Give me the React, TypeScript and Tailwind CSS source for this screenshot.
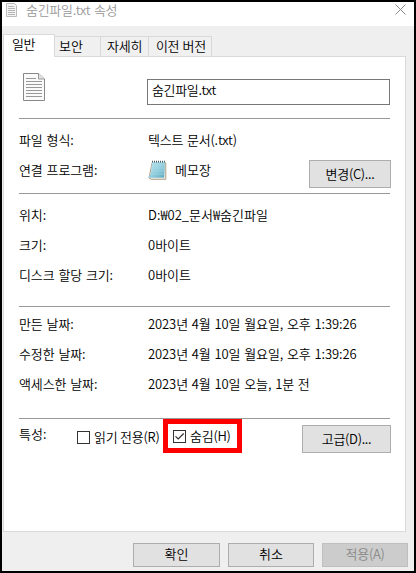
import { useState } from "react";
import type { ReactNode } from "react";

const tabs = [
  { label: "보안", className: "w-[46px] pl-[4px]" },
  { label: "자세히", className: "w-[48px] pl-[6px] tracking-[-0.2px]" },
  { label: "이전 버전", className: "w-[63px] pl-[7px] tracking-[-0.4px]" },
];

const dates = [
  { label: "만든 날짜:", value: "2023년 4월 10일 월요일, 오후 1:39:26" },
  { label: "수정한 날짜:", value: "2023년 4월 10일 월요일, 오후 1:39:26" },
  { label: "액세스한 날짜:", value: "2023년 4월 10일 오늘, 1분 전" },
];

function TextFileIcon({ className }: { className?: string }) {
  return (
    <svg viewBox="0 0 22 28" className={className} fill="none">
      <path d="M.5.5H15.500L21.500 6V27.500H.5Z" fill="#fafafa" stroke="#888" />
      <path d="M15.500.5V6H21.500" fill="#e4e4e4" stroke="#999" />
      <path
        d="M3 5.500H13M3 8.500H19M3 11.500H19M3 14.500H19M3 17.500H19M3 20.500H19M3 23.500H19"
        stroke="#999"
      />
    </svg>
  );
}

function SmallFileIcon() {
  return (
    <svg viewBox="0 0 11 14" className="mt-[1px] h-[14px] w-[11px]" fill="none">
      <path d="M.5.5H8.500L10.500 2.500V13.500H.5Z" fill="#f4f4f4" stroke="#bbb" />
      <path d="M2 3.500H8M2 5.500H9M2 7.500H9M2 9.500H9M2 11.500H9" stroke="#b5b5b5" />
    </svg>
  );
}

function NotepadIcon() {
  return (
    <svg viewBox="0 0 19 20" className="h-5 w-[19px] shrink-0">
      <defs>
        <linearGradient id="page" x1="0" y1="0" x2="1" y2="1">
          <stop offset="0" stopColor="#c4e6ee" />
          <stop offset="0.5" stopColor="#98d0df" />
          <stop offset="1" stopColor="#5eaac0" />
        </linearGradient>
      </defs>
      <path d="M4 3H17.800V19.300H3L1 18Z" fill="#f3f0e6" stroke="#8d7a5c" strokeWidth="0.7" />
      <path d="M4 2H17L16.200 17.800H.2L3 13Z" fill="url(#page)" />
      <path d="M4.500 5H16M4.300 8H16M4 11H15.800M3.500 14H15.500" stroke="#a6dbe7" strokeWidth="0.600" />
      <path d="M4 1.700H17" stroke="#4c5960" strokeWidth="1.700" strokeDasharray="1 1" />
    </svg>
  );
}

function Row({ label, children }: { label: string; children: ReactNode }) {
  return (
    <div className="flex h-[30px] items-center">
      <div className="w-[129px] tracking-[-0.1px]">{label}</div>
      {children}
    </div>
  );
}

function Checkbox({
  label,
  checked,
  onChange,
}: {
  label: string;
  checked: boolean;
  onChange: () => void;
}) {
  return (
    <button
      type="button"
      role="checkbox"
      aria-checked={checked}
      onClick={onChange}
      className="flex items-center gap-[4px] tracking-[-0.25px]"
    >
      <span className="flex h-[13px] w-[13px] items-center justify-center border border-[#333] bg-white">
        {checked && (
          <svg viewBox="0 0 11 11" className="h-[11px] w-[11px]" fill="none">
            <path d="M1.500 5.300L4.200 8L9.700 2.500" stroke="#333" strokeWidth="1.200" />
          </svg>
        )}
      </span>
      <span>{label}</span>
    </button>
  );
}

export default function App() {
  const [readOnly, setReadOnly] = useState(false);
  const [hidden, setHidden] = useState(true);

  return (
    <div className="flex h-[573px] w-[416px] flex-col border-2 border-black bg-[#efefef] font-['Noto_Sans_CJK_KR',sans-serif] text-[13px] leading-[18px] font-[350] whitespace-nowrap text-black [word-spacing:1px]">
      <div className="flex h-6 shrink-0 items-start bg-white pl-1 text-[#999]">
        <SmallFileIcon />
        <span className="-mt-[1px] ml-[9px] tracking-[-0.3px]">숨긴파일.txt 속성</span>
        <svg viewBox="0 0 11 11" className="mt-[2px] mr-[8px] ml-auto h-[11px] w-[11px]">
          <path d="M.5.5L10.500 10.500M10.500.5L.5 10.500" stroke="#888" />
        </svg>
      </div>

      <div className="mt-2 flex h-[22px] shrink-0 items-end pl-[1px]">
        <div className="relative z-10 -mb-[1px] h-[23px] w-[52px] border border-b-0 border-[#d9d9d9] bg-white pl-[8px] tracking-[-0.5px]">
          일반
        </div>
        {tabs.map((tab) => (
          <div
            key={tab.label}
            className={`h-5 border-t border-r border-[#d9d9d9] bg-[#f0f0f0] ${tab.className}`}
          >
            {tab.label}
          </div>
        ))}
      </div>

      <div className="ml-[1px] h-[476px] w-[403px] shrink-0 border border-[#d9d9d9] bg-white pl-[15px]">
        <div className="flex h-[61px] items-start">
          <TextFileIcon className="mt-[16px] ml-[4px] h-[28px] w-[22px]" />
          <div className="mt-[22px] ml-[102px] h-[26px] w-[243px] border border-[#777] pl-[4px] leading-[20px] tracking-[-0.35px]">
            숨긴파일.txt
          </div>
        </div>

        <div className="h-[75px] w-[371px] border-t border-[#999] pt-[6px]">
          <Row label="파일 형식:">
            <span className="tracking-[-0.2px]">텍스트 문서(.txt)</span>
          </Row>
          <Row label="연결 프로그램:">
            <NotepadIcon />
            <span className="ml-[8px]">메모장</span>
            <button className="mt-[8px] -mr-[1px] ml-auto h-7 w-[82px] border border-[#adadad] bg-[#e1e1e1] tracking-[-0.3px]">
              변경(C)...
            </button>
          </Row>
        </div>

        <div className="h-[113px] w-[371px] border-t border-[#999] pt-[6px]">
          <Row label="위치:">D:₩02_문서₩숨긴파일</Row>
          <Row label="크기:">0바이트</Row>
          <Row label="디스크 할당 크기:">0바이트</Row>
        </div>

        <div className="h-[112px] w-[371px] border-t border-[#999] pt-[2px]">
          {dates.map((date) => (
            <Row key={date.label} label={date.label}>
              <span className="tracking-[-0.1px]">{date.value}</span>
            </Row>
          ))}
        </div>

        <div className="flex w-[371px] items-start border-t border-[#999]">
          <div className="mt-[6px] w-[58px]">특성:</div>
          <div className="mt-[9px]">
            <Checkbox label="읽기 전용(R)" checked={readOnly} onChange={() => setReadOnly(!readOnly)} />
          </div>
          <div className="absolute top-[419px] left-[163px] flex h-[34px] w-[79px] items-center border-[5px] border-[#fe0000] pl-[5px]">
            <Checkbox label="숨김(H)" checked={hidden} onChange={() => setHidden(!hidden)} />
          </div>
          <button className="mt-[6px] -mr-[1px] ml-auto h-7 w-[89px] border border-[#adadad] bg-[#e1e1e1] tracking-[-0.3px]">
            고급(D)...
          </button>
        </div>
      </div>

      <div className="mt-[11px] flex gap-[8px] pl-[131px]">
        <button className="h-6 w-[87px] border border-[#adadad] bg-[#e1e1e1] pb-[2px]">확인</button>
        <button className="h-6 w-[86px] border border-[#adadad] bg-[#e1e1e1] pb-[2px]">취소</button>
        <button disabled className="h-6 w-[86px] border border-[#bfbfbf] bg-[#ccc] pb-[2px] tracking-[-0.3px] text-[#888]">
          적용(A)
        </button>
      </div>
    </div>
  );
}
